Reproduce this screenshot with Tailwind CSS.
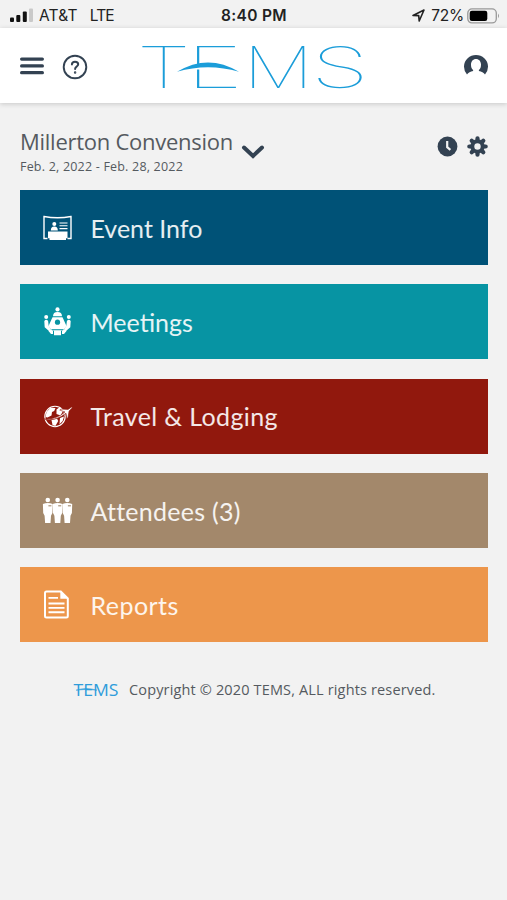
<!DOCTYPE html>
<html lang="en">

<head>
    <title>TEMS</title>
    <meta charset="utf-8">
    <meta name="viewport" content="width=device-width, initial-scale=1.0">
    <script src="https://cdn.jsdelivr.net/npm/@tailwindcss/browser@4"></script>
</head>

<body class="bg-[#f2f2f2] min-h-screen overflow-x-hidden font-['Open_Sans',sans-serif] text-[#555a60]">
    <!-- Status bar -->
    <div class="h-7 grid grid-cols-3 items-center pt-[3px] pl-[10px] pr-[7px] font-['Inter',sans-serif] text-[15.5px] text-[#222]">
        <div class="flex items-center whitespace-nowrap">
            <svg class="w-[24px] h-[15px] mr-[5px]" viewBox="0 0 24 15">
                <rect x="0" y="9.5" width="4" height="4.5" rx="1" fill="#111" />
                <rect x="6.3" y="7" width="4" height="7" rx="1" fill="#111" />
                <rect x="12.8" y="3.5" width="4" height="10.5" rx="1" fill="#111" />
                <rect x="19" y="0.5" width="4" height="13.5" rx="1" fill="#c9c9c9" />
            </svg>
            <span class="tracking-[0.2px]">AT&amp;T</span>
            <span class="ml-[12px] tracking-[-0.9px]">LTE</span>
        </div>
        <div class="text-center font-semibold tracking-[0.35px] -ml-[2px]">8:40 PM</div>
        <div class="flex items-center justify-end whitespace-nowrap">
            <svg class="w-[13px] h-[13px] mr-[6px]" viewBox="0 0 13 13">
                <path d="M1 6.5 12 1 7.2 12 6.7 6.6Z" fill="none" stroke="#222" stroke-width="1.6" stroke-linejoin="round" />
            </svg>
            <span class="tracking-[-0.2px]">72%</span>
            <svg class="w-[33px] h-[16px] ml-[3px]" viewBox="0 0 33 16">
                <rect x="0.8" y="0.9" width="28.5" height="14" rx="4.2" fill="none" stroke="#999" stroke-width="1.3" />
                <rect x="2.7" y="2.8" width="17.6" height="10.2" rx="2.2" fill="#000" />
                <path d="M31 5.5q2 2.3 0 4.8z" fill="#999" />
            </svg>
        </div>
    </div>

    <!-- Header -->
    <header class="h-[75px] bg-white shadow-[0_1px_5px_rgba(0,0,0,0.18)] flex items-center pl-5 pr-[18px] text-[#334252]">
        <svg class="w-6 h-[20px]" viewBox="0 0 24 20" stroke="currentColor" stroke-width="3.2" stroke-linecap="round">
            <path d="M1.6 3.1h20.8M1.6 9.9h20.8M1.6 16.7h20.8" />
        </svg>
        <svg class="w-[26px] h-[26px] ml-[18px] mt-[3px]" viewBox="0 0 26 26" fill="none" stroke="currentColor" stroke-linecap="round">
            <circle cx="13" cy="13" r="11.3" stroke-width="1.9" />
            <path d="M9.9 10.4C10 8.7 11.2 7.7 13 7.7s3.2 1 3.2 2.6c0 2.2-3.1 2.4-3.1 4.8" stroke-width="2" />
            <circle cx="13.1" cy="18.4" r="0.5" stroke-width="1.5" />
        </svg>
        <svg class="w-[236px] h-[74px] ml-[46px]" viewBox="0 0 236 74" fill="#1b9dd9" font-family="Inter" font-size="57" font-weight="100">
            <text x="3" y="58.5" textLength="53.5" lengthAdjust="spacingAndGlyphs">T</text>
            <text x="52" y="58.5" textLength="57" lengthAdjust="spacingAndGlyphs">E</text>
            <text x="109.4" y="58.5" textLength="69.6" lengthAdjust="spacingAndGlyphs">M</text>
            <text x="176.9" y="58.5" textLength="58" lengthAdjust="spacingAndGlyphs">S</text>
            <path d="M66 31h36v12H66zM60 37h8v3.5h-8z" fill="#fff" />
            <path d="M43 42.8Q74 24 105 42.8Q74 33.5 43 42.8Z" />
        </svg>
        <svg class="w-[26px] h-[26px] ml-auto" viewBox="0 0 26 26">
            <path d="M4 21.500A12 11.700 0 1 1 22 21.500C20.800 19.600 18.500 18.400 15.900 17.900V17C17.500 15.800 18 14 18 11.800 18 8.400 16 6 13 6S8 8.400 8 11.800C8 14 8.500 15.800 10.100 17V17.900C7.500 18.400 5.200 19.600 4 21.500Z" fill="currentColor" />
        </svg>
    </header>

    <main class="px-5 pt-[24px]">
        <!-- Event selector -->
        <div class="flex h-[63px]">
            <div class="whitespace-nowrap">
                <h1 class="text-[22px] leading-[28px] tracking-[-0.26px]">Millerton Convension</h1>
                <p class="text-[12.5px] leading-[20px] mt-[2px] tracking-[0.2px]">Feb. 2, 2022 - Feb. 28, 2022</p>
            </div>
            <svg class="w-[24px] h-[16px] ml-[8px] mt-[17px]" viewBox="0 0 24 16">
                <path d="M3 3.5 12 12 21 3.5" fill="none" stroke="#334252" stroke-width="4" stroke-linecap="round" />
            </svg>
            <div class="flex gap-[9px] ml-auto mt-[9px] -mr-[1px]">
                <svg class="w-[21px] h-[21px]" viewBox="0 0 21 21">
                    <circle cx="10.5" cy="10.5" r="9.9" fill="#334252" />
                    <path d="M10.2 5v6.2l3.2 2.6" fill="none" stroke="#f2f2f2" stroke-width="2.2" />
                </svg>
                <svg class="w-[21px] h-[21px]" viewBox="0 0 21 21">
                    <g stroke="#334252" stroke-width="4.2" stroke-linecap="round">
                        <path d="M10.5 2.3v16.4M2.3 10.5h16.4M4.7 4.7l11.6 11.6M16.3 4.7 4.7 16.3" />
                    </g>
                    <circle cx="10.5" cy="10.5" r="7.2" fill="#334252" />
                    <circle cx="10.5" cy="10.5" r="3.2" fill="#f2f2f2" />
                </svg>
            </div>
        </div>

        <!-- Menu -->
        <nav class="flex flex-col gap-[19.3px] w-[468px] font-['Lato',sans-serif] text-[25px] text-white/90">
            <a href="#" class="h-[75px] bg-[#005277] flex items-center gap-[17.5px] pl-[22px]">
                <svg class="w-[31px] h-[31px]" viewBox="0 0 31 31">
                    <path d="M5.5 26.5H2V4.5q13.5 2.5 27 0V26.5h-3.5" fill="none" stroke="#fff" stroke-width="1.4" />
                    <path d="M6 19.5h19.5v6.8h-1.5v1.7H7.5v-1.7H6z" fill="#fff" />
                    <circle cx="12.3" cy="12" r="2" fill="#fff" />
                    <path d="M8.8 18.5q0-4 3.5-4t3.5 4z" fill="#fff" />
                    <path d="M17.5 11h8M17.5 13.8h8M17.5 16.6h8" stroke="#fff" stroke-width="1.1" />
                </svg>
                <span class="pt-[2px]">Event Info</span>
            </a>
            <a href="#" class="h-[75px] bg-[#0794a3] flex items-center gap-[17.5px] pl-[22px]">
                <svg class="w-[31px] h-[31px]" viewBox="0 0 31 31" fill="#fff">
                    <circle cx="15.5" cy="3.4" r="2.1" />
                    <path d="M11 10.3q0-4.3 4.5-4.3t4.500 4.300z" />
                    <circle cx="4.200" cy="11" r="2" />
                    <circle cx="26.800" cy="11" r="2" />
                    <path d="M2.300 15q1.900-2.600 3.800 0l.6 5 2 2.500-2 2.300-4-3.500zM28.700 15q-1.900-2.600-3.800 0l-.6 5-2 2.500 2 2.300 4-3.500z" />
                    <path d="M10.500 11.300h10l4 8.700-3.300 4.500H9.800L6.500 20z" />
                    <circle cx="15.500" cy="16.200" r="2.600" fill="#0794a3" />
                    <path d="M9.500 23.500h12" stroke="#0794a3" stroke-width="0.800" />
                    <path d="M7.500 22.500 11 25v3H9L6.500 25zM23.500 22.500 20 25v3h2l2.500-3zM12 24.500h7v4.700h-7z" />
                </svg>
                <span class="pt-px">Meetings</span>
            </a>
            <a href="#" class="h-[75px] bg-[#91180d] flex items-center gap-[17.5px] pl-[22px]">
                <svg class="w-[31px] h-[31px]" viewBox="0 0 31 31" fill="#fff">
                    <circle cx="13" cy="15.5" r="10.2" fill="none" stroke="#fff" stroke-width="1.1" />
                    <path d="M4.5 11 8.5 6.8l5 .2-1.3 3-2.2 1-.5 3.5-4 2.1-2-.6z" />
                    <path d="m14.5 8.5 3-2.3 4 3-3 5.300-4-1.500zM9.500 19l5.500-1.500 1.200 2.500-2.800 5.100-2.900-1.100zM18 17l4-1.500-1.300 4.500-3.200 3.200z" />
                    <path d="M1.300 18Q14 19 23 11l-5.200-1.900 1.200-1 7 .3L29.700 6l.6.8-3.200 3.200-1.200 6.800-1.100.8-.8-5.300Q13 21 1.300 18Z" stroke="#91180d" stroke-width="0.600" />
                </svg>
                <span class="pt-px tracking-[0.38px]">Travel &amp; Lodging</span>
            </a>
            <a href="#" class="h-[75px] bg-[#a3886b] flex items-center gap-[17.5px] pl-[22px]">
                <svg class="w-[31px] h-[31px]" viewBox="0 0 31 31" fill="#fff">
                    <g id="person">
                        <circle cx="5.8" cy="5" r="2.3" />
                        <path d="M0.9 9Q5.8 6.8 10.7 9L10.4 18 9 20.8 8.5 28H3.1L2.6 20.8 1.2 18Z" />
                        <path d="M6.4 10.8h3" stroke="#a3886b" stroke-width="1.1" />
                    </g>
                    <use href="#person" x="9.8" />
                    <use href="#person" x="19.5" />
                </svg>
                <span class="pt-[2px] tracking-[0.27px]">Attendees (3)</span>
            </a>
            <a href="#" class="h-[75px] bg-[#ed964b] flex items-center gap-[17.5px] pl-[22px]">
                <svg class="w-[31px] h-[31px]" viewBox="0 0 31 31">
                    <path d="M4.500 2.500h14.300l7 6.800v17.600q0 1.500-1.500 1.500H4.500Q3 28.400 3 26.900V4Q3 2.500 4.500 2.500Z" fill="none" stroke="#fff" stroke-width="2" />
                    <path d="M18.300 2.200v7.600h7.500z" fill="#fff" />
                    <path d="M6.500 8.900h9.500M6.500 14.500h16M6.500 18.900h16M6.500 23.300h16" stroke="#fff" stroke-width="1.900" />
                </svg>
                <span class="pt-[2px] tracking-[0.45px]">Reports</span>
            </a>
        </nav>
    </main>

    <!-- Footer -->
    <footer class="flex items-center pl-[73px] mt-[36px] h-6 whitespace-nowrap text-[14.5px]">
        <svg class="w-[46px] h-[26px] mr-[10px]" viewBox="0 0 46 26" fill="#2f9ddb">
            <text x="0.5" y="19" font-family="Open Sans" font-size="16" font-weight="500" textLength="45" lengthAdjust="spacingAndGlyphs">TEMS</text>
            <path d="M3 13.2Q13 9.8 24 13.2Q13 11.6 3 13.2Z" stroke="#2f9ddb" stroke-width="0.5" />
        </svg>
        <p class="tracking-[0.15px]">Copyright © 2020 TEMS, ALL rights reserved.</p>
    </footer>
</body>

</html>
